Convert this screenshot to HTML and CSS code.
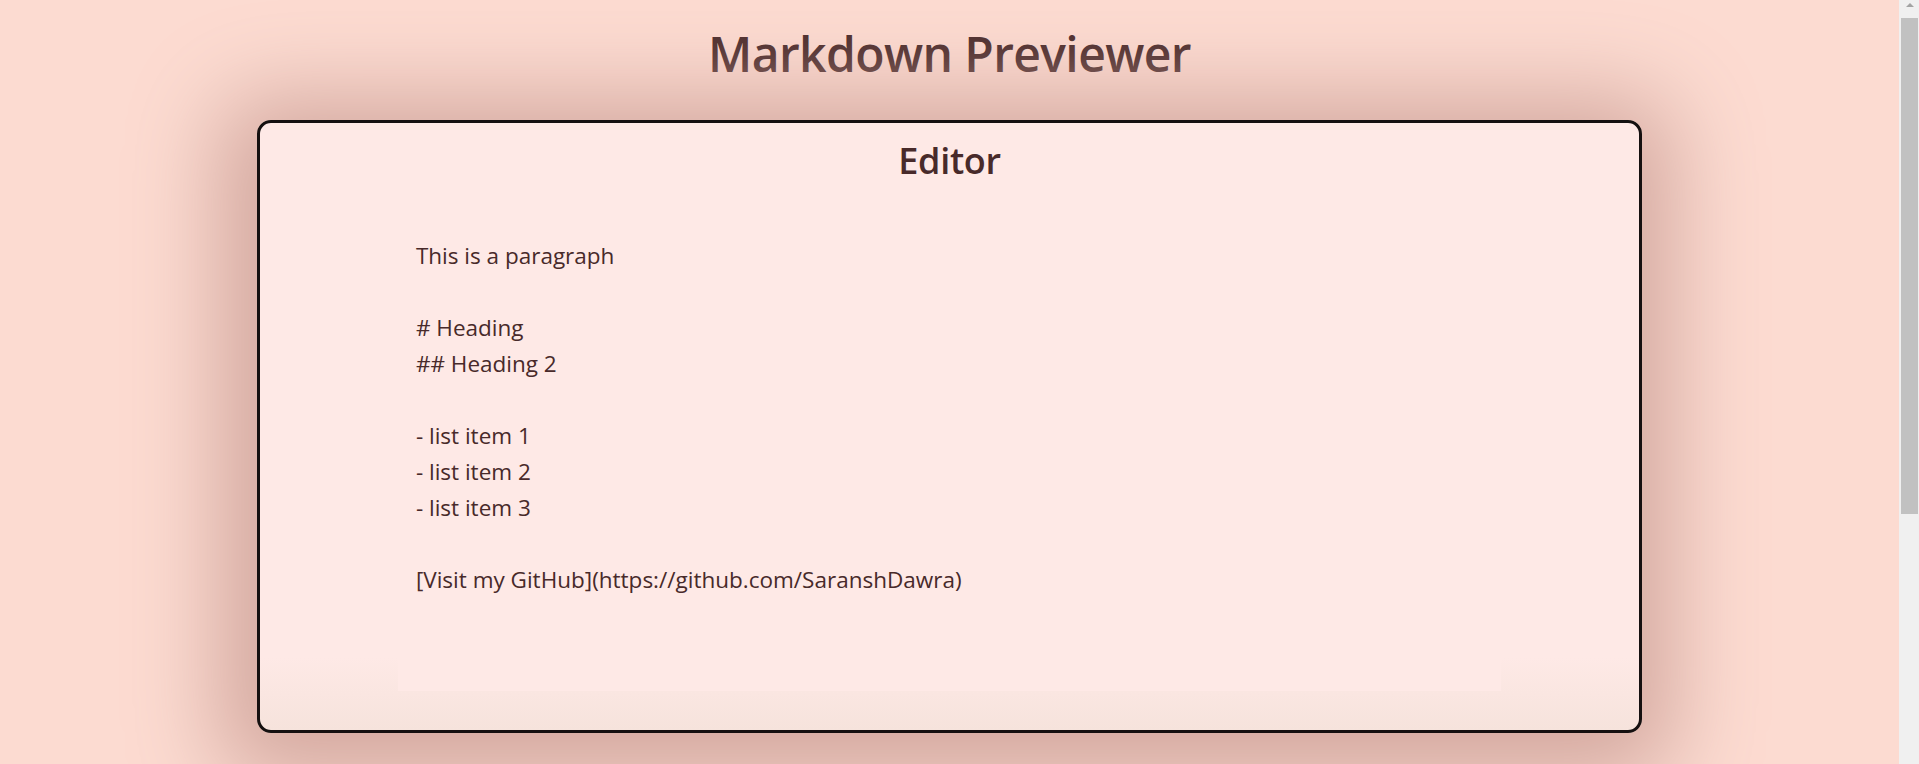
FILE: index.html
```html
<!DOCTYPE html>
<html lang="en">
<head>
<meta charset="utf-8">
<title>Markdown Previewer</title>
<link rel="stylesheet" href="styles.css">
</head>
<body>
<div class="page">
  <h1 class="title">Markdown Previewer</h1>
  <main class="panels">
    <section class="panel editor-panel">
      <h2 class="panel-title">Editor</h2>
      <textarea class="editor" spellcheck="false">This is a paragraph

# Heading
## Heading 2

- list item 1
- list item 2
- list item 3

[Visit my GitHub](https://github.com/SaranshDawra)</textarea>
    </section>
  </main>
</div>
<div class="scrollbar" aria-hidden="true">
  <div class="scroll-up"><span class="arrow"></span></div>
  <div class="scroll-thumb"></div>
</div>
</body>
</html>
```

FILE: styles.css
```css
html {
  background: #fcdbd1;
}

body {
  margin: 0;
  height: 764px;
  overflow: hidden;
  font-family: "Open Sans", "Noto Sans", sans-serif;
  color: #482a2a;
  background: #fcdbd1;
}

.page {
  margin-right: 20px;
}

.title {
  margin: 0;
  padding-top: 20px;
  text-align: center;
  font-size: 48px;
  font-weight: 600;
  line-height: 67px;
  letter-spacing: -0.6px;
}

.panels {
  display: flex;
  flex-direction: column;
  align-items: center;
  padding-top: 33px;
}

.panel {
  box-sizing: border-box;
  width: 1385px;
  border: 3px solid #151010;
  border-radius: 14px;
  background: linear-gradient(180deg, #fee9e6 0%, #fee9e6 88%, #f6e3dc 100%);
  box-shadow: -4px 12px 90px 34px #d3a89f;
  display: flex;
  flex-direction: column;
  align-items: center;
}

.editor-panel {
  height: 613px;
}

.panel-title {
  margin: 15px 0 0;
  font-size: 36px;
  font-weight: 600;
  line-height: 45px;
  letter-spacing: -0.3px;
}

.editor {
  box-sizing: border-box;
  width: 80%;
  height: 473px;
  margin-top: 35px;
  padding: 20px 18px;
  border: none;
  outline: none;
  resize: none;
  overflow: hidden;
  background: #fee9e6;
  color: #482a2a;
  font-family: "Open Sans", "Noto Sans", sans-serif;
  font-size: 22.5px;
  line-height: 36px;
}

.scrollbar {
  position: fixed;
  top: 0;
  right: 0;
  width: 20px;
  height: 100vh;
  background: #f0f0f0;
  display: flex;
  flex-direction: column;
}

.scroll-up {
  height: 17px;
  display: flex;
  align-items: center;
  justify-content: center;
  padding-left: 2px;
}

.arrow {
  width: 0;
  height: 0;
  border-left: 4px solid transparent;
  border-right: 4px solid transparent;
  border-bottom: 4px solid #a3a3a3;
  margin-bottom: 7px;
}

.scroll-thumb {
  height: 496px;
  margin: 1px 1px 0 2px;
  background: #c1c1c1;
}
```
